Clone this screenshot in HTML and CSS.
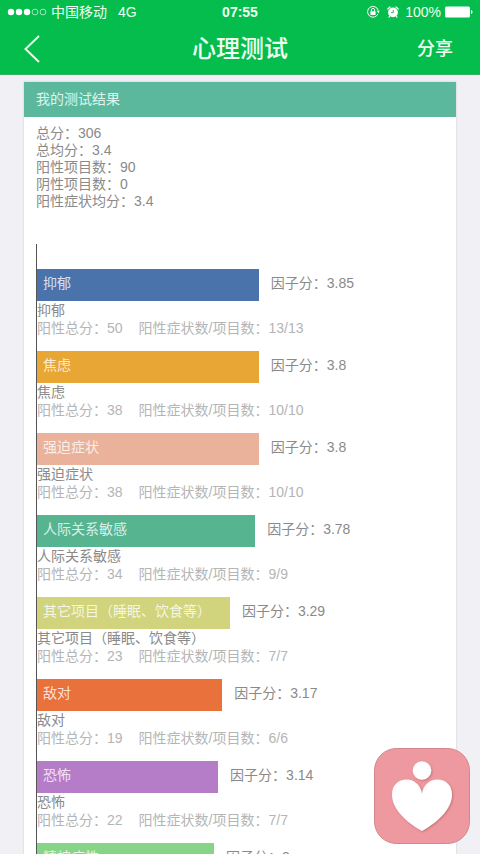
FILE: index.html
```html
<!DOCTYPE html>
<html lang="zh-CN">
<head>
<meta charset="utf-8">
<meta name="viewport" content="width=device-width, initial-scale=1">
<title>心理测试</title>
<link rel="stylesheet" href="styles.css">
</head>
<body>
<header class="top">
  <div class="status">
    <div class="status-side">
      <svg class="signal" width="40" height="8" viewBox="0 0 40 8" aria-hidden="true">
        <g fill="#fff"><circle cx="4" cy="4" r="3.2"/><circle cx="12" cy="4" r="3.2"/><circle cx="20" cy="4" r="3.2"/></g>
        <g fill="none" stroke="#fff" stroke-opacity=".75" stroke-width=".8"><circle cx="28" cy="4" r="2.9"/><circle cx="36" cy="4" r="2.9"/></g>
      </svg>
      <span class="carrier">中国移动</span>
      <span>4G</span>
    </div>
    <span class="clock">07:55</span>
    <div class="status-side status-right">
      <svg width="14" height="14" viewBox="0 0 14 14" aria-hidden="true">
        <path d="M12 8.8A5.4 5.4 0 1 1 12.2 5.4" fill="none" stroke="#fff" stroke-width="1"/>
        <path d="M10.6 5.8h3.2l-1.5 2.4z" fill="#fff"/>
        <rect x="4.4" y="6.2" width="5.2" height="3.8" rx=".5" fill="#fff"/>
        <path d="M5.4 6.4V5a1.6 1.6 0 0 1 3.2 0v1.4" fill="none" stroke="#fff" stroke-width="1"/>
      </svg>
      <svg class="alarm" width="12" height="12" viewBox="0 0 12 12" aria-hidden="true">
        <circle cx="6" cy="6.4" r="4.9" fill="#fff"/>
        <path d="M.8 3 3 1M11.2 3 9 1M2.800 10.200l-.8 1M9.200 10.200l.8 1" stroke="#fff" stroke-width="1.200" stroke-linecap="round"/>
        <path d="M6.300 4v2.600H4" fill="none" stroke="#04bd4c" stroke-width=".9"/>
      </svg>
      <span>100%</span>
      <svg class="battery" width="28" height="12" viewBox="0 0 28 12" aria-hidden="true">
        <rect y=".5" width="25" height="11" rx="1.5" fill="#fff"/>
        <path d="M26 4c2 .4 2 3.600 0 4z" fill="#fff"/>
      </svg>
    </div>
  </div>
  <nav class="nav">
    <button class="back" type="button" aria-label="返回">
      <svg width="16" height="28" viewBox="0 0 16 28" aria-hidden="true"><path d="M15 1 1.500 14 15 27" fill="none" stroke="#e9ffe9" stroke-width="2"/></svg>
    </button>
    <h1 class="title">心理测试</h1>
    <button class="share" type="button">分享</button>
  </nav>
</header>

<main class="content">
  <section class="card">
    <h2 class="card-title">我的测试结果</h2>
    <div class="card-body">
      <ul class="summary">
        <li>总分：306</li>
        <li>总均分：3.4</li>
        <li>阳性项目数：90</li>
        <li>阴性项目数：0</li>
        <li>阳性症状均分：3.4</li>
      </ul>
      <ul class="chart">
        <li class="factor">
          <div class="row"><div class="bar blue" style="width:54.5%">抑郁</div><span class="score">因子分：3.85</span></div>
          <p class="name">抑郁</p>
          <p class="detail"><span>阳性总分：50</span><span>阳性症状数/项目数：13/13</span></p>
        </li>
        <li class="factor">
          <div class="row"><div class="bar amber" style="width:54.5%">焦虑</div><span class="score">因子分：3.8</span></div>
          <p class="name">焦虑</p>
          <p class="detail"><span>阳性总分：38</span><span>阳性症状数/项目数：10/10</span></p>
        </li>
        <li class="factor">
          <div class="row"><div class="bar salmon" style="width:54.5%">强迫症状</div><span class="score">因子分：3.8</span></div>
          <p class="name">强迫症状</p>
          <p class="detail"><span>阳性总分：38</span><span>阳性症状数/项目数：10/10</span></p>
        </li>
        <li class="factor">
          <div class="row"><div class="bar teal" style="width:53.6%">人际关系敏感</div><span class="score">因子分：3.78</span></div>
          <p class="name">人际关系敏感</p>
          <p class="detail"><span>阳性总分：34</span><span>阳性症状数/项目数：9/9</span></p>
        </li>
        <li class="factor">
          <div class="row"><div class="bar lime" style="width:47.4%">其它项目（睡眠、饮食等）</div><span class="score">因子分：3.29</span></div>
          <p class="name">其它项目（睡眠、饮食等）</p>
          <p class="detail"><span>阳性总分：23</span><span>阳性症状数/项目数：7/7</span></p>
        </li>
        <li class="factor">
          <div class="row"><div class="bar orange" style="width:45.5%">敌对</div><span class="score">因子分：3.17</span></div>
          <p class="name">敌对</p>
          <p class="detail"><span>阳性总分：19</span><span>阳性症状数/项目数：6/6</span></p>
        </li>
        <li class="factor">
          <div class="row"><div class="bar purple" style="width:44.5%">恐怖</div><span class="score">因子分：3.14</span></div>
          <p class="name">恐怖</p>
          <p class="detail"><span>阳性总分：22</span><span>阳性症状数/项目数：7/7</span></p>
        </li>
        <li class="factor">
          <div class="row"><div class="bar green" style="width:43.5%">精神病性</div><span class="score">因子分：3</span></div>
        </li>
      </ul>
    </div>
  </section>
</main>

<button class="heart" type="button" aria-label="心理">
  <svg width="96" height="96" viewBox="0 0 96 96" aria-hidden="true">
    <defs>
      <filter id="soft" x="-20%" y="-20%" width="140%" height="140%"><feDropShadow dx="1" dy="1" stdDeviation="1" flood-color="#9c4a52" flood-opacity=".5"/></filter>
    </defs>
    <rect x=".5" y=".5" width="95" height="95" rx="22" fill="#ee999f" stroke="#d4868d"/>
    <g fill="#fff" filter="url(#soft)">
      <circle cx="48" cy="22.500" r="9.300"/>
      <path d="M48 46C47 37 40 31.500 33 31.500C24 31.500 18 37.500 18 46.500C18 61 32 74 48 83C64 74 78 61 78 46.500C78 37.500 72 31.500 63 31.500C56 31.500 49 37 48 46Z"/>
    </g>
  </svg>
</button>
</body>
</html>
```
FILE: styles.css
```css
* {
  box-sizing: border-box;
}

body {
  display: flex;
  flex-direction: column;
  height: 100vh;
  margin: 0;
  background: #f0f0f5;
  color: #8a8a8a;
  font: 14px/18px "Liberation Sans", "Noto Sans CJK SC", sans-serif;
}

h1, h2, p, ul {
  margin: 0;
  padding: 0;
  font-weight: 400;
}

ul {
  list-style: none;
}

button {
  padding: 0;
  border: 0;
  background: none;
  color: inherit;
  font: inherit;
  cursor: pointer;
}

svg {
  display: block;
}

.top {
  flex: none;
  background: #04bd4c;
  border-bottom: 1px solid #3aae66;
  color: #effff0;
}

.status {
  display: flex;
  align-items: center;
  height: 24px;
  padding: 0 7px;
}

.status-side {
  display: flex;
  flex: 1;
  align-items: center;
}

.status-right {
  justify-content: flex-end;
}

.carrier {
  margin: 0 11px 0 4px;
}

.clock {
  font-weight: 700;
}

.alarm {
  margin: 0 6px 0 7px;
}

.battery {
  margin-left: 4px;
}

.nav {
  display: grid;
  grid-template-columns: 1fr auto 1fr;
  align-items: center;
  height: 50px;
  padding: 0 24px;
}

.back {
  justify-self: start;
}

.title {
  font-size: 24px;
  font-weight: 500;
  line-height: 32px;
}

.share {
  justify-self: end;
  padding-right: 3px;
  font-size: 18px;
  font-weight: 500;
  line-height: 24px;
}

.content {
  flex: 1;
  min-height: 0;
  overflow-y: auto;
  padding: 7px 24px 0;
  scrollbar-width: none;
}

.card {
  background: #fff;
  box-shadow: 0 0 2px #c8c8cc;
}

.card-title {
  padding: 8px 12px 9px;
  background: #5cb89c;
  color: #dff5ec;
  font-size: 14px;
  line-height: 18px;
}

.card-body {
  padding: 8px 12px 0;
}

.summary {
  line-height: 17px;
}

.chart {
  margin-top: 34px;
  padding-top: 24px;
  border-left: 1px solid #555;
}

.factor {
  padding-bottom: 14px;
}

.row {
  display: flex;
  align-items: flex-start;
}

.bar {
  flex: none;
  padding: 5px 6px 9px;
  color: #fffc;
  white-space: nowrap;
}

.score {
  padding: 5px 12px;
}

.detail {
  display: flex;
  gap: 16px;
  color: #b5b5b5;
}

.blue { background: #4a73ac; }
.amber { background: #e8a634; }
.salmon { background: #eab29b; }
.teal { background: #56b491; }
.lime { background: #d1d47c; }
.orange { background: #e9713c; }
.purple { background: #b57dc8; }
.green { background: #85d488; }

.chart {
  padding-top: 25px;
}

.heart {
  position: fixed;
  right: 10px;
  bottom: 10px;
}
```
